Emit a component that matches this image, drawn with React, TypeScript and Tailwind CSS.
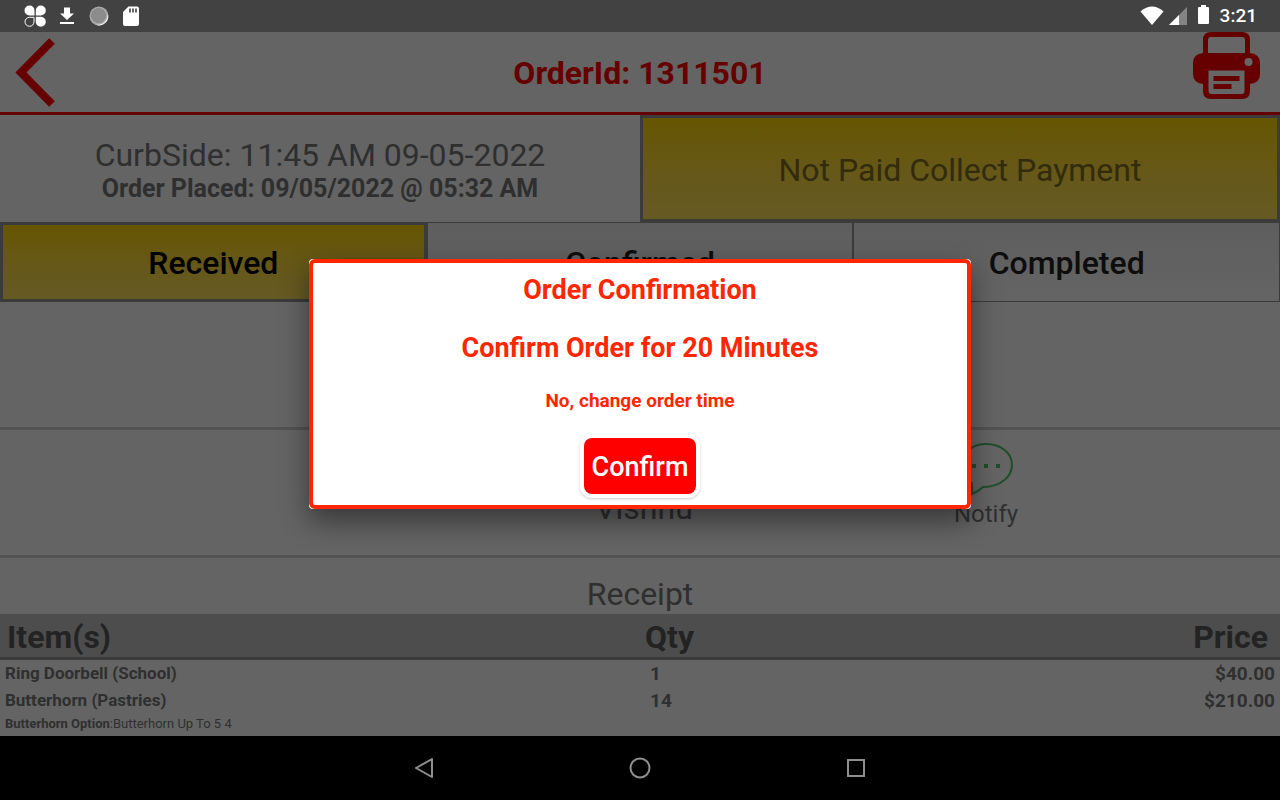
const items = [
  {
    name: "Ring Doorbell (School)",
    qty: 1,
    price: "$40.00",
  },
  {
    name: "Butterhorn (Pastries)",
    qty: 14,
    price: "$210.00",
    option: { label: "Butterhorn Option", value: "Butterhorn Up To 5 4" },
  },
];

function StatusBar() {
  return (
    <div className="flex h-8 items-center justify-between bg-[#424242] px-[23px] text-white">
      <div className="flex items-center gap-2">
        {/* Clover */}
        <svg className="h-6 w-6" viewBox="0 0 24 24" fill="currentColor">
          <path d="M11.500 11.500H6.500a5 5 0 1 1 5-5z" />
          <path d="M12.800 11.500h5a5 5 0 1 0-5-5z" />
          <path d="M12.800 12.800h5a5 5 0 1 1-5 5z" />
          <path d="M11 13.300H6.500a4.500 4.500 0 1 0 4.500 4.500z" fill="none" stroke="currentColor" />
        </svg>
        {/* Download */}
        <svg className="h-6 w-6" viewBox="0 0 24 24" fill="currentColor">
          <path d="M19 9.500h-4V3.500H9v6H5L12 16zM5 18v2h14v-2z" />
        </svg>
        {/* Sync indicator */}
        <svg className="h-6 w-6" viewBox="0 0 24 24">
          <circle cx="12" cy="12" r="9.500" fill="#a8a8a8" />
          <path d="M20.500 9a9 9 0 0 1-12 11.500a10 10 0 0 0 12-11.500" fill="#f2f2f2" />
          <circle cx="11.500" cy="11.500" r="7" fill="#8c8c8c" stroke="#7a7a7a" strokeDasharray="1 1" />
        </svg>
        {/* SD card */}
        <svg className="h-6 w-6" viewBox="0 0 24 24">
          <path d="M9.500 2.500H18q2 0 2 2v15.500q0 2-2 2H6q-2 0-2-2V8z" fill="currentColor" />
          <path d="M11 4.500v4M14 4.500v4M17 4.500v4" stroke="#666" strokeWidth="2" />
        </svg>
      </div>
      <div className="flex items-center">
        <svg className="h-6 w-6" viewBox="0 0 24 24" fill="currentColor">
          <path d="M12 21L.5 7.500Q12-2.500 23.500 7.500z" />
        </svg>
        <svg className="ml-1 h-5 w-5" viewBox="0 0 20 20" fill="currentColor">
          <path d="M19 1v18H1z" opacity=".35" />
          <path d="M11 9v10H1z" />
        </svg>
        <svg className="ml-1 h-6 w-6" viewBox="0 0 24 24" fill="currentColor">
          <path d="M9 1h5v2h2q1 0 1 1v15q0 1-1 1H7q-1 0-1-1V4q0-1 1-1h2z" />
        </svg>
        <span className="ml-1 text-[19px] font-medium leading-6">3:21</span>
      </div>
    </div>
  );
}

function Header() {
  return (
    <header className="grid h-[83px] grid-cols-[1fr_auto_1fr] items-start border-b-[3px] border-[#660000] px-3">
      <button aria-label="Back" className="mt-1 justify-self-start">
        <svg className="h-[72px] w-12" viewBox="0 0 48 72" fill="none" stroke="#660000" strokeWidth="8">
          <path d="M40 5L9 36.500L40 68" />
        </svg>
      </button>
      <h1 className="pt-5 text-[32px] font-bold leading-[42px] text-[#660000]">OrderId: 1311501</h1>
      <button aria-label="Print" className="mr-2 justify-self-end">
        <svg className="h-[67px] w-[67px]" viewBox="0 0 67 67" fill="none">
          <path
            d="M10 21V8q0-8 8-8h31q8 0 8 8v13q10 1 10 10v11q0 9-10 10v7q0 8-8 8H18q-8 0-8-8v-7Q0 51 0 42V31q0-9 10-10z"
            fill="#660000"
          />
          <path d="M15 21V8q0-3 3-3h31q3 0 3 3v13zM15.500 38.500h36V59q0 3-3 3h-30q-3 0-3-3z" fill="#666" />
          <circle cx="55.500" cy="30" r="4" fill="#666" />
          <path d="M20.500 46.500h26M20.500 54.500h18" stroke="#660000" strokeWidth="5" />
        </svg>
      </button>
    </header>
  );
}

function ConfirmDialog() {
  return (
    <div className="absolute inset-0 flex items-center justify-center">
      <div
        role="dialog"
        aria-labelledby="dialog-title"
        className="w-full max-w-[662px] rounded-sm bg-white shadow-[0_12px_28px_rgba(0,0,0,0.45)]"
      >
        <div className="flex flex-col items-center rounded-md border-4 border-[#ff2600] px-4 pb-[7px] pt-[9px] text-[#ff2600]">
          <h2 id="dialog-title" className="text-[27px] font-bold leading-9">Order Confirmation</h2>
          <p className="mt-[22px] text-[27px] font-bold leading-9">Confirm Order for 20 Minutes</p>
          <button className="mt-[23px] text-[19px] font-bold leading-6">No, change order time</button>
          <div className="mt-[21px] rounded-xl p-1 shadow-[0_1px_3px_rgba(0,0,0,0.2)]">
            <button className="block h-14 w-28 rounded-lg bg-[#ff0000] pt-0.5 text-[27px] font-medium text-white">
              Confirm
            </button>
          </div>
        </div>
      </div>
    </div>
  );
}

export default function App() {
  return (
    <div className="flex min-h-screen flex-col bg-[#646464] font-['Roboto',sans-serif] text-[#2f2f2f]">
      <StatusBar />

      <main className="relative flex-1">
        <Header />

        {/* Order info */}
        <section className="grid h-[107px] grid-cols-2 text-center">
          <div className="pt-5">
            <p className="text-[32px] leading-10">CurbSide: 11:45 AM 09-05-2022</p>
            <p className="text-[25px] font-bold leading-7">Order Placed: 09/05/2022 @ 05:32 AM</p>
          </div>
          <button className="border-[3px] border-[#3b3b3b] bg-linear-to-b from-[#665500] to-[#665a24] pt-0.5 text-[32px] text-[#332b0d]">
            Not Paid Collect Payment
          </button>
        </section>

        {/* Order status */}
        <nav className="grid h-20 grid-cols-3 text-[32px] font-medium text-[#0d0d0d]">
          <button className="border-[3px] border-[#3b3b3b] bg-linear-to-b from-[#665500] to-[#665a24] pt-0.5 text-black">
            Received
          </button>
          <button className="border border-[#3b3b3b] bg-linear-to-b from-[#5e5e5e] to-[#646464] pt-0.5">
            Confirmed
          </button>
          <button className="border border-[#3b3b3b] bg-linear-to-b from-[#5e5e5e] to-[#646464] pt-0.5">
            Completed
          </button>
        </nav>

        <section className="h-32 border-b-[3px] border-[#525252]" />

        {/* Customer */}
        <section className="relative h-32 border-b-[3px] border-[#525252]">
          <p className="pl-2 pt-[58px] text-center text-[32px] leading-10">Vishnu</p>
          <button className="absolute right-[254px] top-3 flex w-20 flex-col items-center text-[24px] leading-8">
            <svg className="h-14 w-14" viewBox="0 0 56 56" fill="none" stroke="#1f4d2b" strokeWidth="2">
              <path d="M13 40C-6 28 4 2 28 2c15 0 26 9 26 21s-12 22-29 22q-4 4-11 7q1-6-1-12z" />
              <path d="M13 40v12" strokeWidth="3" />
              <path d="M14 24h4M26 24h4M38 24h4" strokeWidth="4" />
            </svg>
            Notify
          </button>
        </section>

        {/* Receipt */}
        <section>
          <h2 className="h-14 pt-4 text-center text-[32px] leading-10">Receipt</h2>
          <table className="w-full table-fixed text-left">
            <thead className="border-b-[3px] border-[#3b3b3b] bg-[#4d4d4d] text-[32px] leading-10 text-[#232323]">
              <tr>
                <th className="w-1/2 px-[7px] pt-[3px]">Item(s)</th>
                <th className="w-1/4 px-[5px] pt-[3px]">Qty</th>
                <th className="w-1/4 px-3 pt-[3px] text-right">Price</th>
              </tr>
            </thead>
            <tbody className="font-bold leading-[27px]">
              {items.map((item) => (
                <tr key={item.name} className="align-top">
                  <td className="px-[5px] text-[17px]">
                    {item.name}
                    {item.option && (
                      <p className="text-[13px] font-normal leading-5">
                        <b>{item.option.label}</b>:{item.option.value}
                      </p>
                    )}
                  </td>
                  <td className="px-[10px] text-[19px]">{item.qty}</td>
                  <td className="px-[5px] text-right text-[19px]">{item.price}</td>
                </tr>
              ))}
            </tbody>
          </table>
        </section>

        <ConfirmDialog />
      </main>

      {/* System navigation */}
      <nav className="flex h-16 items-center justify-center gap-48 bg-black">
        <button aria-label="Back">
          <svg className="h-6 w-6" viewBox="0 0 24 24" fill="none" stroke="#8f8f8f" strokeWidth="2" strokeLinejoin="round">
            <path d="M20 3v18L4 12z" />
          </svg>
        </button>
        <button aria-label="Home">
          <svg className="h-6 w-6" viewBox="0 0 24 24" fill="none" stroke="#8f8f8f" strokeWidth="2">
            <circle cx="12" cy="12" r="9.500" />
          </svg>
        </button>
        <button aria-label="Recent apps">
          <svg className="h-6 w-6" viewBox="0 0 24 24" fill="none" stroke="#8f8f8f" strokeWidth="2">
            <path d="M4 4h16v16H4z" />
          </svg>
        </button>
      </nav>
    </div>
  );
}
